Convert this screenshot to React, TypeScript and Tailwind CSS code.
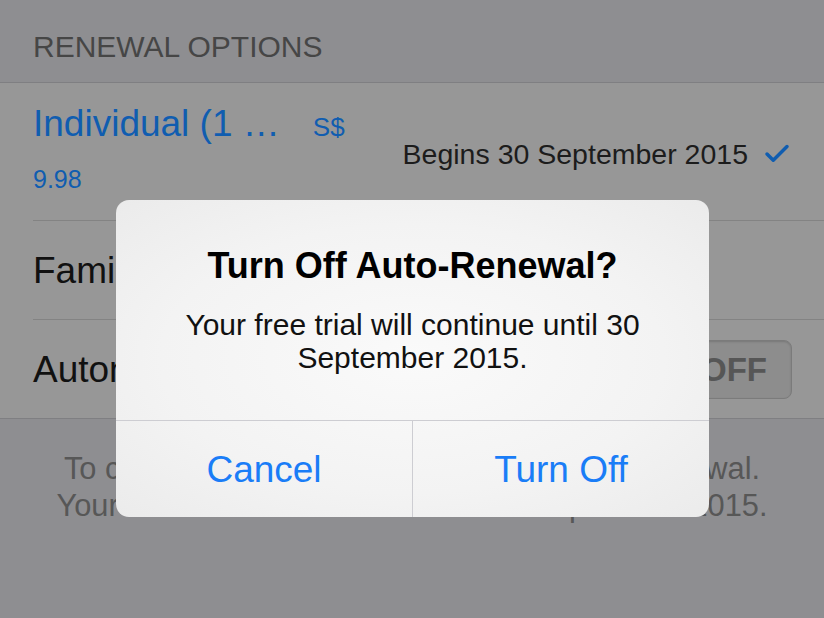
import { Check } from 'lucide-react';

const font = { fontFamily: '"Liberation Sans", Arial, Helvetica, sans-serif' };

export default function App() {
    return (
        <div
            className="relative h-[618px] w-[824px] overflow-hidden bg-[#8e8e91]"
            style={font}
        >
            {/* Header */}
            <div className="h-[83px] border-b border-[#7f7f82] px-[33px] pt-[32px]">
                <div className="text-[30px] leading-[30px] text-[#464646]">
                    RENEWAL OPTIONS
                </div>
            </div>

            {/* Rows */}
            <div className="border-b border-[#7f7f82] bg-[#979797]">
                <div className="pl-[33px]">
                    <div className="flex h-[138px] border-b border-[#838383] pr-[32px]">
                        <div className="flex flex-col pt-[22px]">
                            <div className="flex items-baseline">
                                <span className="text-[37px] leading-[37px] text-[#105db0]">
                                    Individual (1 …
                                </span>
                                <span className="ml-[33px] text-[26px] leading-[26px] text-[#105db0]">
                                    S$
                                </span>
                            </div>
                            <div className="mt-[25px] text-[25px] leading-[25px] text-[#105db0]">
                                9.98
                            </div>
                        </div>
                        <div className="ml-auto mt-[5px] flex items-center">
                            <span className="text-[28.5px] leading-[28px] text-[#1c1c1c]">
                                Begins 30 September 2015
                            </span>
                            <Check
                                className="ml-[14px] h-[30px] w-[30px] text-[#105db0]"
                                strokeWidth={2.8}
                            />
                        </div>
                    </div>

                    <div className="flex h-[99px] items-center border-b border-[#838383] pr-[32px]">
                        <span className="text-[37px] leading-[37px] text-[#111]">
                            Family (up to 6 people)
                        </span>
                    </div>

                    <div className="flex h-[98px] items-center pr-[32px]">
                        <span className="text-[37px] leading-[37px] text-[#111]">
                            Automatic Renewal
                        </span>
                        <div className="ml-auto flex h-[59px] w-[150px] items-center justify-end rounded-[8px] border border-[#7b7b7b] bg-[#8d8d8d] pr-[24px] shadow-[inset_0_1px_2px_rgba(0,0,0,0.15)]">
                            <span className="text-[33px] font-bold leading-[33px] text-[#565656]">
                                OFF
                            </span>
                        </div>
                    </div>
                </div>
            </div>

            {/* Footer */}
            <div className="px-[20px] pt-[31px] text-center text-[30.8px] leading-[37px] text-[#575757]">
                <p>To cancel your free trial, just turn off Auto-Renewal.</p>
                <p>Your free trial will continue until 30 September 2015.</p>
            </div>

            {/* Alert */}
            <div className="absolute left-[116px] top-[200px] flex h-[317px] w-[593px] flex-col overflow-hidden rounded-[13px] bg-[radial-gradient(ellipse_at_center,#fafafa_0%,#f3f3f3_60%,#ebebeb_100%)]">
                <div className="flex h-[220px] flex-col items-center px-[30px] pt-[48px] text-center">
                    <div className="text-[36px] font-bold leading-[36px] text-black">
                        Turn Off Auto-Renewal?
                    </div>
                    <div className="mt-[24px] text-[30px] leading-[33px] text-[#111]">
                        Your free trial will continue until 30
                        <br />
                        September 2015.
                    </div>
                </div>
                <div className="flex flex-1 border-t border-[#cdcdd2]">
                    <button className="flex flex-1 items-center justify-center text-[37px] leading-[37px] text-[#1a7df7]">
                        Cancel
                    </button>
                    <div className="w-px bg-[#cdcdd2]" />
                    <button className="flex flex-1 items-center justify-center text-[37px] leading-[37px] text-[#1a7df7]">
                        Turn Off
                    </button>
                </div>
            </div>
        </div>
    );
}
